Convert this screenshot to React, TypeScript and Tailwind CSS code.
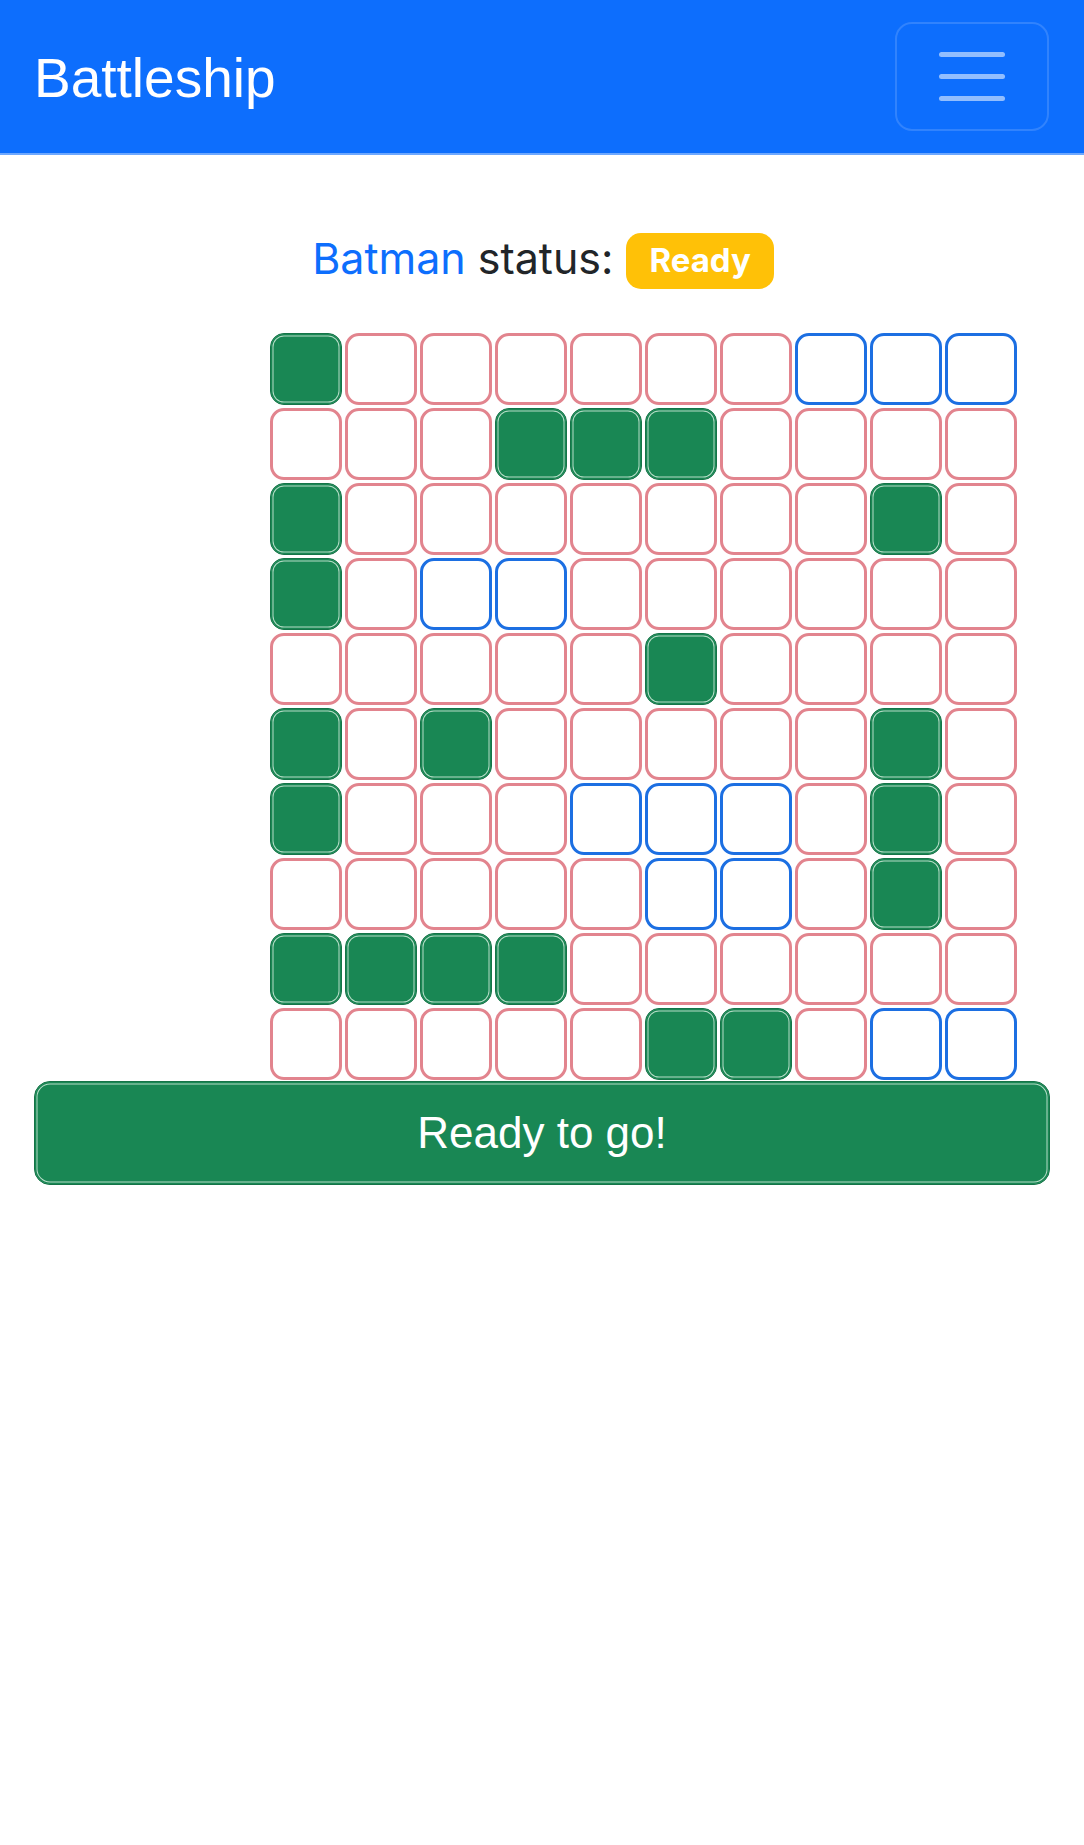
import React from "react";

const layout = [
  "GPPPPPPBBB",
  "PPPGGGPPPP",
  "GPPPPPPPGP",
  "GPBBPPPPPP",
  "PPPPPGPPPP",
  "GPGPPPPPGP",
  "GPPPBBBPGP",
  "PPPPPBBPGP",
  "GGGGPPPPPP",
  "PPPPPGGPBB",
];

function Cell({ t }: { t: string }) {
  if (t === "G") {
    return (
      <div className="w-[72.4px] h-[72.4px] rounded-[14px] bg-[#198754] border border-[#157347] shadow-[inset_0_0_0_1.5px_#198754,inset_0_0_0_2.5px_#b5dcc6]" />
    );
  }
  if (t === "B") {
    return <div className="w-[72.4px] h-[72.4px] rounded-[14px] bg-white border-[3px] border-[#1c6fe2]" />;
  }
  return <div className="w-[72.4px] h-[72.4px] rounded-[14px] bg-white border-[3px] border-[#e2848e]" />;
}

export default function App() {
  return (
    <div className="w-[1084px] min-h-[1845px] bg-white">
      <nav className="h-[155px] bg-[#0d6efd] border-b-2 border-[#6ea8fe] flex items-center justify-between pl-[34px] pr-[35px]">
        <span className="text-white text-[55px] leading-none font-['Liberation_Sans',Arial,sans-serif] mt-[4px]">
          Battleship
        </span>
        <button className="w-[154px] h-[109px] mt-[0px] rounded-[17px] border-2 border-white/15 flex flex-col items-center justify-center gap-[17px]">
          <span className="block w-[66px] h-[5px] rounded-full bg-white/55" />
          <span className="block w-[66px] h-[5px] rounded-full bg-white/55" />
          <span className="block w-[66px] h-[5px] rounded-full bg-white/55" />
        </button>
      </nav>
      <main className="px-[34px]">
        <div className="pt-[75px] flex justify-center items-center font-['Inter',sans-serif] text-[43px] leading-[66px] text-[#212529] pl-[2px]">
          <span className="text-[#0d6efd] -mt-[5px]">Batman</span>
          <span className="ml-[12px] -mt-[5px]">status:</span>
          <span className="ml-[13px] inline-flex items-center justify-center h-[56px] px-[23px] rounded-[15px] bg-[#ffc107] text-white font-bold text-[33px] leading-none">
            Ready
          </span>
        </div>
        <div className="mt-[42px] ml-[236px] flex flex-col gap-[2.6px] w-[748px]">
          {layout.map((row, r) => (
            <div key={r} className="flex gap-[2.6px]">
              {row.split("").map((t, c) => (
                <Cell key={c} t={t} />
              ))}
            </div>
          ))}
        </div>
        <button className="mt-[1px] w-full h-[104px] rounded-[16px] bg-[#198754] border border-[#157347] shadow-[inset_0_0_0_1.5px_#198754,inset_0_0_0_2.5px_#b5dcc6] text-white text-[44px] font-['Liberation_Sans',Arial,sans-serif] flex items-center justify-center">
          Ready to go!
        </button>
      </main>
    </div>
  );
}
